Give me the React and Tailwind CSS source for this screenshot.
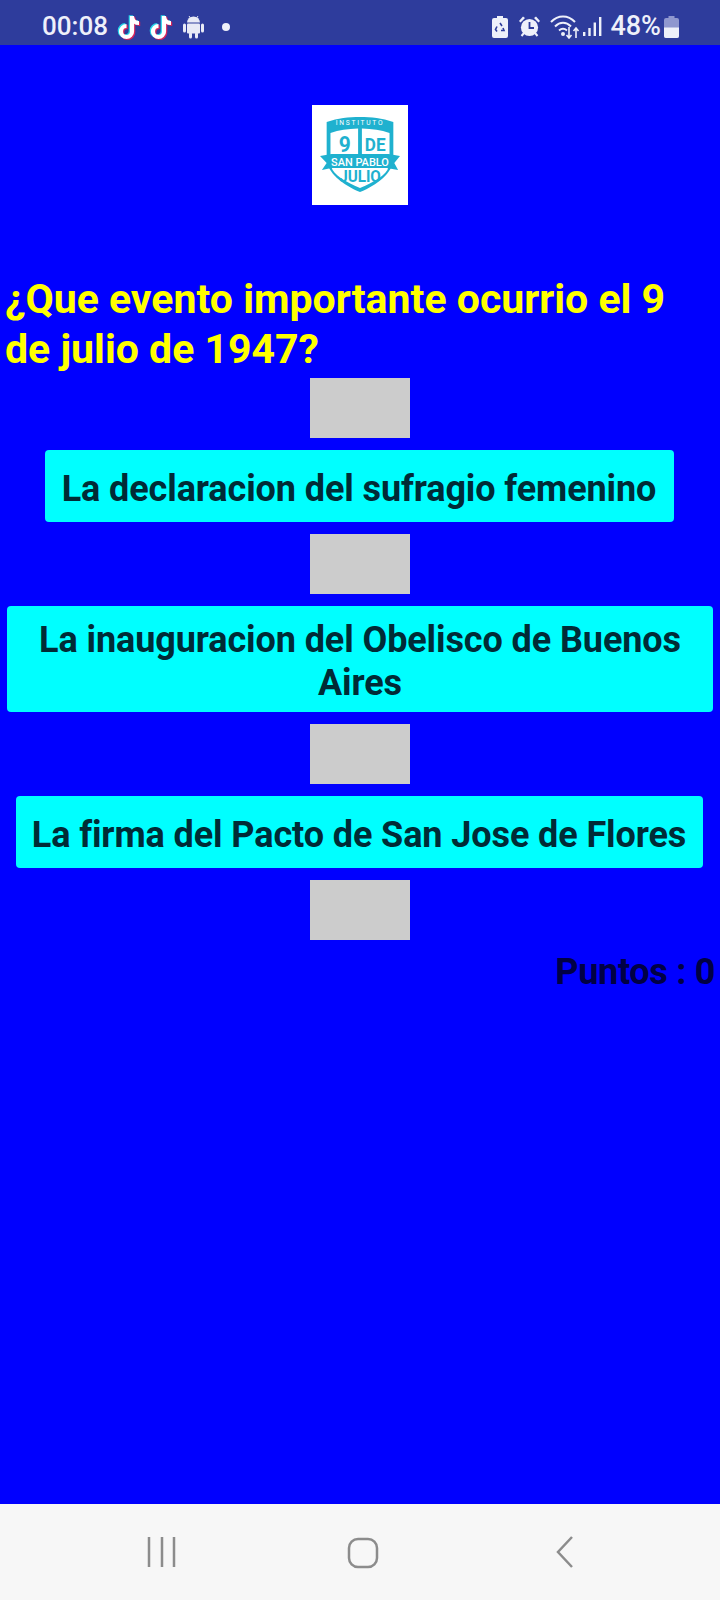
import React from 'react';

const TikTok = () => (
  <svg width="27" height="27" viewBox="0 0 27 27" fill="none">
    <g strokeWidth="4.2" fill="none">
      <path d="M16 3v15.500a5.500 5.500 0 1 1-5.500-5.500M16 4c.5 3.500 3.500 6 7 6" stroke="#25d4e8" transform="translate(-1.200 -.8)" />
      <path d="M16 3v15.500a5.500 5.500 0 1 1-5.500-5.500M16 4c.5 3.500 3.500 6 7 6" stroke="#d8245c" transform="translate(1.200 .8)" />
      <path d="M16 3v15.500a5.500 5.500 0 1 1-5.500-5.500M16 4c.5 3.500 3.500 6 7 6" stroke="#ffffff" />
    </g>
  </svg>
);

const AndroidIcon = () => (
  <svg width="21" height="24" viewBox="0 0 21 24" fill="#e8eaf6">
    <path d="M4 7.500a6.500 6 0 0 1 13 0z" />
    <path d="M6 1l2 3M15 1l-2 3" stroke="#e8eaf6" strokeWidth="1" />
    <rect x="4" y="8.500" width="13" height="10" rx="1" />
    <rect x="0" y="8.500" width="3" height="9" rx="1.500" />
    <rect x="18" y="8.500" width="3" height="9" rx="1.500" />
    <rect x="6" y="17" width="3" height="6.500" rx="1.500" />
    <rect x="12" y="17" width="3" height="6.500" rx="1.500" />
  </svg>
);

const BatterySaver = () => (
  <svg width="16" height="22" viewBox="0 0 16 22">
    <path d="M5 0h6v2h3a2 2 0 0 1 2 2v16a2 2 0 0 1-2 2H2a2 2 0 0 1-2-2V4a2 2 0 0 1 2-2h3z" fill="#eef0fa" />
    <path d="M8 7l2 3M11 12l1 2.500h-3M5 15.500l-1.500-2L5 10.500" stroke="#2e3c9c" strokeWidth="1.600" fill="none" />
  </svg>
);

const Alarm = () => (
  <svg width="23" height="23" viewBox="0 0 23 23">
    <circle cx="11.500" cy="12.500" r="8.600" fill="#eef0fa" />
    <path d="M1 6l4-4.500 2 1.500-4.500 4.500zM22 6l-4-4.500-2 1.500 4.500 4.500z" fill="#eef0fa" />
    <path d="M3.500 21l2.500-3M19.500 21l-2.500-3" stroke="#eef0fa" strokeWidth="2" />
    <path d="M11.500 7v6h4.500" stroke="#2e3c9c" strokeWidth="1.800" fill="none" />
  </svg>
);

const Wifi = () => (
  <svg width="30" height="24" viewBox="0 0 30 24" fill="none" stroke="#eef0fa" strokeWidth="2">
    <path d="M1 7c7-7.500 17-7.500 24 0" />
    <path d="M5 11.500c5-5 11-5 16 0" />
    <path d="M9 15.500c3-2.500 5-2.500 8 0" />
    <circle cx="13" cy="19" r="1" fill="#eef0fa" />
    <path d="M19 12v11M16.500 20l2.500 3 2.500-3" strokeWidth="1.600" />
    <path d="M26 23V13M23.500 16l2.500-3 2.500 3" strokeWidth="1.600" />
  </svg>
);

const Signal = () => (
  <svg width="19" height="21" viewBox="0 0 19 21" fill="#eef0fa">
    <rect x="0" y="16" width="2.400" height="4" />
    <rect x="5.300" y="12" width="2.400" height="8" />
    <rect x="10.600" y="6.500" width="2.400" height="13.500" />
    <rect x="16" y="1" width="2.400" height="19" />
  </svg>
);

const Battery = () => (
  <svg width="15" height="22" viewBox="0 0 15 22">
    <path d="M4.500 0h6v2H13a2 2 0 0 1 2 2v16a2 2 0 0 1-2 2H2a2 2 0 0 1-2-2V4a2 2 0 0 1 2-2h2.500z" fill="#8f97cf" />
    <path d="M0 11.500h15V20a2 2 0 0 1-2 2H2a2 2 0 0 1-2-2z" fill="#eef0fa" />
  </svg>
);

const Logo = () => (
  <div className="w-[96px] h-[100px] bg-white flex items-center justify-center">
    <svg width="80" height="84" viewBox="0 0 84 84" preserveAspectRatio="none" style={{ fontFamily: 'Roboto, sans-serif' }}>
      <path d="M7 9c12-4 23-5 35-5s23 1 35 5v36c0 15-17 27-35 34C24 72 7 60 7 45z" fill="#1fb1cf" />
      <path d="M11 20c9-3 18-4 29-4.500V45H11zM44 15.500c11 .5 20 1.500 29 4.500v25H44z" fill="#fff" />
      <path d="M12 54h60c-2 8-15 15-30 21-15-6-28-13-30-21z" fill="#fff" />
      <path d="M0 43l12-2h60l12 2-6 7 4 7-12-2H12L2 57l5-7z" fill="#1fb1cf" />
      <text x="42" y="12.500" textAnchor="middle" fontSize="7" letterSpacing="1.800" fill="#fff">INSTITUTO</text>
      <text x="26" y="39" textAnchor="middle" fontSize="22" fontWeight="700" fill="#1fb1cf">9</text>
      <text x="58" y="38" textAnchor="middle" fontSize="18" fontWeight="700" fill="#1fb1cf">DE</text>
      <text x="42" y="53" textAnchor="middle" fontSize="11.500" fontWeight="500" fill="#fff">SAN PABLO</text>
      <text x="42" y="69" textAnchor="middle" fontSize="16" fontWeight="700" fill="#1fb1cf">JULIO</text>
    </svg>
  </div>
);

const ImageSlot = () => <div className="w-[100px] h-[60px] bg-[#cccccc] shrink-0" />;

const Answer = ({ children, className }) => (
  <button className={`my-3 px-4 pt-[13px] pb-[7px] min-h-[72px] bg-[#00ffff] rounded-[4px] text-[#002b36] text-[36px] leading-[43px] tracking-[-0.1px] font-bold text-center ${className}`}>
    {children}
  </button>
);

export default function App() {
  return (
    <div className="w-[720px] h-[1600px] flex flex-col bg-[#0000ff] font-['Roboto',sans-serif]">
      {/* status bar */}
      <div className="h-[45px] pt-[8px] bg-[#2e3c9c] flex items-center justify-between pl-[42px] pr-[41px] text-[#eef0fa] shrink-0">
        <div className="flex items-center">
          <span className="text-[26px] font-medium mr-[8px]">00:08</span>
          <TikTok />
          <span className="w-[5px]" />
          <TikTok />
          <span className="w-[8px]" />
          <AndroidIcon />
          <span className="w-[18px]" />
          <span className="w-[8px] h-[8px] rounded-full bg-[#eef0fa]" />
        </div>
        <div className="flex items-center">
          <BatterySaver />
          <span className="w-[10px]" />
          <Alarm />
          <span className="w-[9px]" />
          <Wifi />
          <span className="w-[3px]" />
          <Signal />
          <span className="w-[8px]" />
          <span className="text-[27px] font-medium mr-[3px]">48%</span>
          <Battery />
        </div>
      </div>

      {/* quiz */}
      <div className="flex-1 flex flex-col items-center">
        <div className="mt-[60px] mb-[69px]">
          <Logo />
        </div>
        <h1 className="w-full pl-[5px] pr-[16px] text-[41px] leading-[50px] font-bold text-[#ffff00] mb-[4px]">
          ¿Que evento importante ocurrio el 9 de julio de 1947?
        </h1>
        <ImageSlot />
        <Answer className="w-[629px] mr-[2px]">La declaracion del sufragio femenino</Answer>
        <ImageSlot />
        <Answer className="w-[706px]">La inauguracion del Obelisco de Buenos Aires</Answer>
        <ImageSlot />
        <Answer className="w-[687px] mr-[2px]">La firma del Pacto de San Jose de Flores</Answer>
        <ImageSlot />
        <div className="w-full pr-[5px] text-right text-[36px] leading-[42px] tracking-[-0.3px] font-bold text-[#000044] mt-[11px]">
          Puntos : 0
        </div>
      </div>

      {/* nav bar */}
      <div className="h-[96px] bg-[#f7f7f7] shrink-0 relative">
        <svg width="30" height="30" viewBox="0 0 30 30" className="absolute left-[147px] top-[33px]" stroke="#8c8c8c" strokeWidth="2.500">
          <path d="M2 0v30M15 0v30M27 0v30" />
        </svg>
        <svg width="32" height="32" viewBox="0 0 32 32" className="absolute left-[347px] top-[33px]" fill="none" stroke="#8c8c8c" strokeWidth="2.500">
          <rect x="2" y="2" width="28" height="28" rx="9" />
        </svg>
        <svg width="20" height="34" viewBox="0 0 20 34" className="absolute left-[555px] top-[31px]" fill="none" stroke="#8c8c8c" strokeWidth="2.500">
          <path d="M17 2L3 17l14 15" />
        </svg>
      </div>
    </div>
  );
}
